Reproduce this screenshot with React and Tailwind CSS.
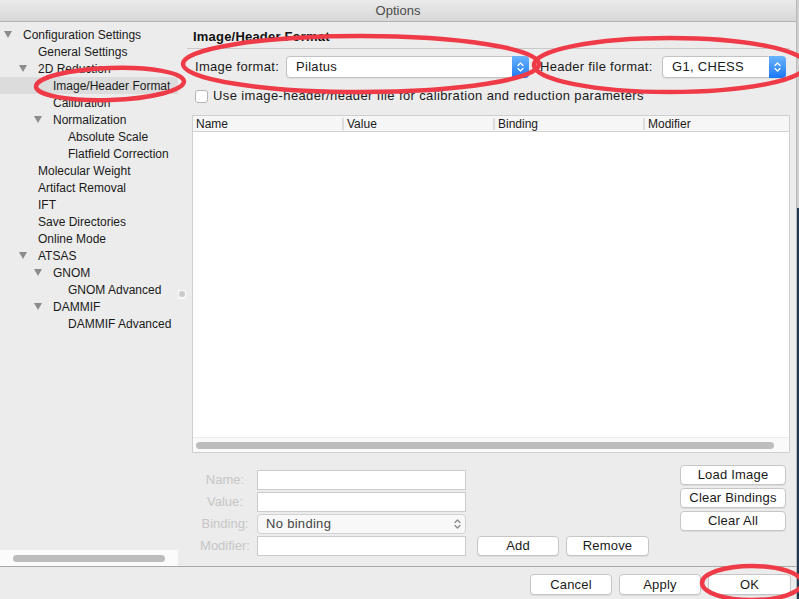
import React from "react";

const tree = [
  { t: "Configuration Settings", l: 0, tri: true },
  { t: "General Settings", l: 1 },
  { t: "2D Reduction", l: 1, tri: true },
  { t: "Image/Header Format", l: 2, sel: true },
  { t: "Calibration", l: 2 },
  { t: "Normalization", l: 2, tri: true },
  { t: "Absolute Scale", l: 3 },
  { t: "Flatfield Correction", l: 3 },
  { t: "Molecular Weight", l: 1 },
  { t: "Artifact Removal", l: 1 },
  { t: "IFT", l: 1 },
  { t: "Save Directories", l: 1 },
  { t: "Online Mode", l: 1 },
  { t: "ATSAS", l: 1, tri: true },
  { t: "GNOM", l: 2, tri: true },
  { t: "GNOM Advanced", l: 3 },
  { t: "DAMMIF", l: 2, tri: true },
  { t: "DAMMIF Advanced", l: 3 },
];

const indent = ["pl-[4px]", "pl-[19px]", "pl-[34px]", "pl-[49px]"];

function Tri() {
  return (
    <svg width="8" height="7" viewBox="0 0 8 7">
      <polygon points="0,0 8,0 4,7" fill="#8c8c8c" />
    </svg>
  );
}

function Chevrons({ color }) {
  return (
    <svg width="9" height="14" viewBox="0 0 9 14">
      <path d="M2 5.5 L4.5 3 L7 5.5" fill="none" stroke={color} strokeWidth="1.3" strokeLinecap="round" strokeLinejoin="round" />
      <path d="M2 8.5 L4.5 11 L7 8.5" fill="none" stroke={color} strokeWidth="1.3" strokeLinecap="round" strokeLinejoin="round" />
    </svg>
  );
}

function Combo({ value, className }) {
  return (
    <div className={"flex items-stretch h-[22px] bg-white border border-[#c2c2c2] rounded-[4px] shadow-[0_1px_0_rgba(0,0,0,0.06)] " + className}>
      <div className="flex-1 flex items-center pl-[9px] text-[13px] tracking-[0.3px] text-[#1a1a1a]">{value}</div>
      <div className="w-[17px] -my-px -mr-px flex items-center justify-center rounded-r-[4px] bg-gradient-to-b from-[#6ab4fb] to-[#1877f5]">
        <Chevrons color="#ffffff" />
      </div>
    </div>
  );
}

function Btn({ children, className }) {
  return (
    <div className={"flex items-center justify-center bg-white border border-[#c6c6c6] rounded-[4px] shadow-[0_1px_0_rgba(0,0,0,0.07)] text-[13px] tracking-[0.2px] text-[#1a1a1a] " + className}>
      {children}
    </div>
  );
}

export default function App() {
  return (
    <div className="w-[799px] h-[599px] flex overflow-hidden bg-[#ececec] text-[#1a1a1a] relative" style={{ fontFamily: '"Liberation Sans", Arial, sans-serif' }}>
      <div className="w-[797px] h-full flex flex-col border-r border-[#b9b9b9]">
        {/* Title bar */}
        <div className="h-[22px] shrink-0 flex items-center justify-center bg-gradient-to-b from-[#ebebeb] to-[#d7d7d7] border-b border-[#b3b3b3] text-[13px] text-[#4b4b4b]">
          Options
        </div>
        {/* Body */}
        <div className="flex h-[544px]">
          {/* Sidebar */}
          <div className="w-[178px] shrink-0 flex flex-col">
            <div className="flex-1 pt-[4px]">
              {tree.map((r, i) => (
                <div key={i} className={"h-[17px] flex items-center text-[12px] " + indent[r.l] + (r.sel ? " bg-[#dcdcdc]" : "")}>
                  <div className="w-[19px] flex items-center">{r.tri ? <Tri /> : null}</div>
                  <span className="whitespace-nowrap">{r.t}</span>
                </div>
              ))}
            </div>
            <div className="h-[16px] bg-[#fbfbfb] flex items-center px-[13px]">
              <div className="h-[7px] w-full rounded-full bg-[#bdbdbd]" />
            </div>
          </div>
          {/* Splitter */}
          <div className="w-[8px] shrink-0 flex items-center justify-center">
            <div className="w-[9px] h-[9px] bg-[#f7f7f7] flex items-center justify-center">
              <div className="w-[6px] h-[6px] rounded-full bg-[#cbcbcb]" />
            </div>
          </div>
          {/* Main */}
          <div className="flex-1 flex flex-col pl-[6px] pr-[6px]">
            <div className="h-[27px] shrink-0 -ml-[5px] pl-[6px] border-b border-[#c9c9c9] flex items-center pt-[3px] text-[13px] font-bold tracking-[0.2px] text-[#111]">
              Image/Header Format
            </div>
            <div className="mt-[7px] h-[22px] flex items-center pl-[3px]">
              <div className="w-[91px] text-[13px] tracking-[0.3px]">Image format:</div>
              <Combo value="Pilatus" className="w-[243px]" />
              <div className="ml-[11px] w-[122px] text-[13px] tracking-[0.3px]">Header file format:</div>
              <Combo value="G1, CHESS" className="w-[124px]" />
            </div>
            <div className="mt-[10px] h-[16px] flex items-center pl-[3px]">
              <div className="w-[13px] h-[13px] bg-white border border-[#b5b5b5] rounded-[3px]" />
              <span className="ml-[5px] text-[13px] tracking-[0.38px] whitespace-nowrap">Use image-header/header file for calibration and reduction parameters</span>
            </div>
            {/* Table */}
            <div className="mt-[11px] h-[338px] flex flex-col border border-[#cfcfcf] bg-white">
              <div className="h-[16px] shrink-0 flex bg-[#f6f6f6] border-b border-[#d3d3d3] text-[12px]">
                <div className="w-[149px] flex items-center pl-[3px]">Name</div>
                <div className="w-[151px] flex items-center">
                  <div className="w-[2px] h-[12px] bg-[#dcdcdc]" />
                  <span className="ml-[3px]">Value</span>
                </div>
                <div className="w-[150px] flex items-center">
                  <div className="w-[2px] h-[12px] bg-[#dcdcdc]" />
                  <span className="ml-[3px]">Binding</span>
                </div>
                <div className="flex-1 flex items-center">
                  <div className="w-[2px] h-[12px] bg-[#dcdcdc]" />
                  <span className="ml-[3px]">Modifier</span>
                </div>
              </div>
              <div className="flex-1" />
              <div className="h-[15px] shrink-0 bg-[#fafafa] border-t border-[#ececec] flex items-center pl-[3px] pr-[15px]">
                <div className="h-[7px] w-full rounded-full bg-[#bdbdbd]" />
              </div>
            </div>
            {/* Form */}
            <div className="flex items-start pl-[3px]">
              <div className="mt-[17px] flex flex-col gap-[2px]">
                {["Name:", "Value:", "Binding:", "Modifier:"].map((l) => (
                  <div key={l} className="h-[20px] flex items-center">
                    <div className="w-[60px] text-center text-[13px] text-[#c6c6c6]">{l}</div>
                    <div className="ml-[2px] w-[209px]">
                      {l === "Binding:" ? (
                        <div className="h-[20px] flex items-center bg-[#f8f8f8] border border-[#d2d2d2] rounded-[4px]">
                          <span className="flex-1 pl-[8px] text-[13px] tracking-[0.3px] text-[#444]">No binding</span>
                          <div className="w-[16px] flex items-center justify-center">
                            <Chevrons color="#8a8a8a" />
                          </div>
                        </div>
                      ) : (
                        <div className="h-[20px] bg-white border border-[#cbcbcb]" />
                      )}
                    </div>
                  </div>
                ))}
              </div>
              <div className="mt-[83px] ml-[11px] flex gap-[7px]">
                <Btn className="w-[82px] h-[20px]">Add</Btn>
                <Btn className="w-[83px] h-[20px]">Remove</Btn>
              </div>
              <div className="ml-auto mr-[4px] mt-[12px] flex flex-col gap-[3px]">
                <Btn className="w-[106px] h-[20px]">Load Image</Btn>
                <Btn className="w-[106px] h-[20px]">Clear Bindings</Btn>
                <Btn className="w-[106px] h-[20px]">Clear All</Btn>
              </div>
            </div>
          </div>
        </div>
        {/* Bottom bar */}
        <div className="flex-1 border-t border-[#a9a9a9] flex items-center justify-end gap-[7px] pr-[5px] pt-[3px]">
          <Btn className="w-[82px] h-[21px]">Cancel</Btn>
          <Btn className="w-[82px] h-[21px]">Apply</Btn>
          <Btn className="w-[83px] h-[21px]">OK</Btn>
        </div>
      </div>
      <div className="w-[2px] flex flex-col">
        <div className="h-[208px] bg-[#cfcfcf]" />
        <div className="flex-1 bg-[#1d3a56]" />
      </div>
      {/* Red annotation ellipses */}
      <svg className="absolute inset-0 pointer-events-none" width="799" height="599" viewBox="0 0 799 599">
        <g fill="none" stroke="#ef3b48" strokeWidth="4.5">
          <ellipse cx="110" cy="84" rx="74" ry="16" transform="rotate(-2 110 84)" />
          <ellipse cx="361" cy="64" rx="178" ry="28" />
          <ellipse cx="670" cy="65" rx="136" ry="27" />
          <ellipse cx="752" cy="583" rx="50" ry="17" />
        </g>
      </svg>
    </div>
  );
}
